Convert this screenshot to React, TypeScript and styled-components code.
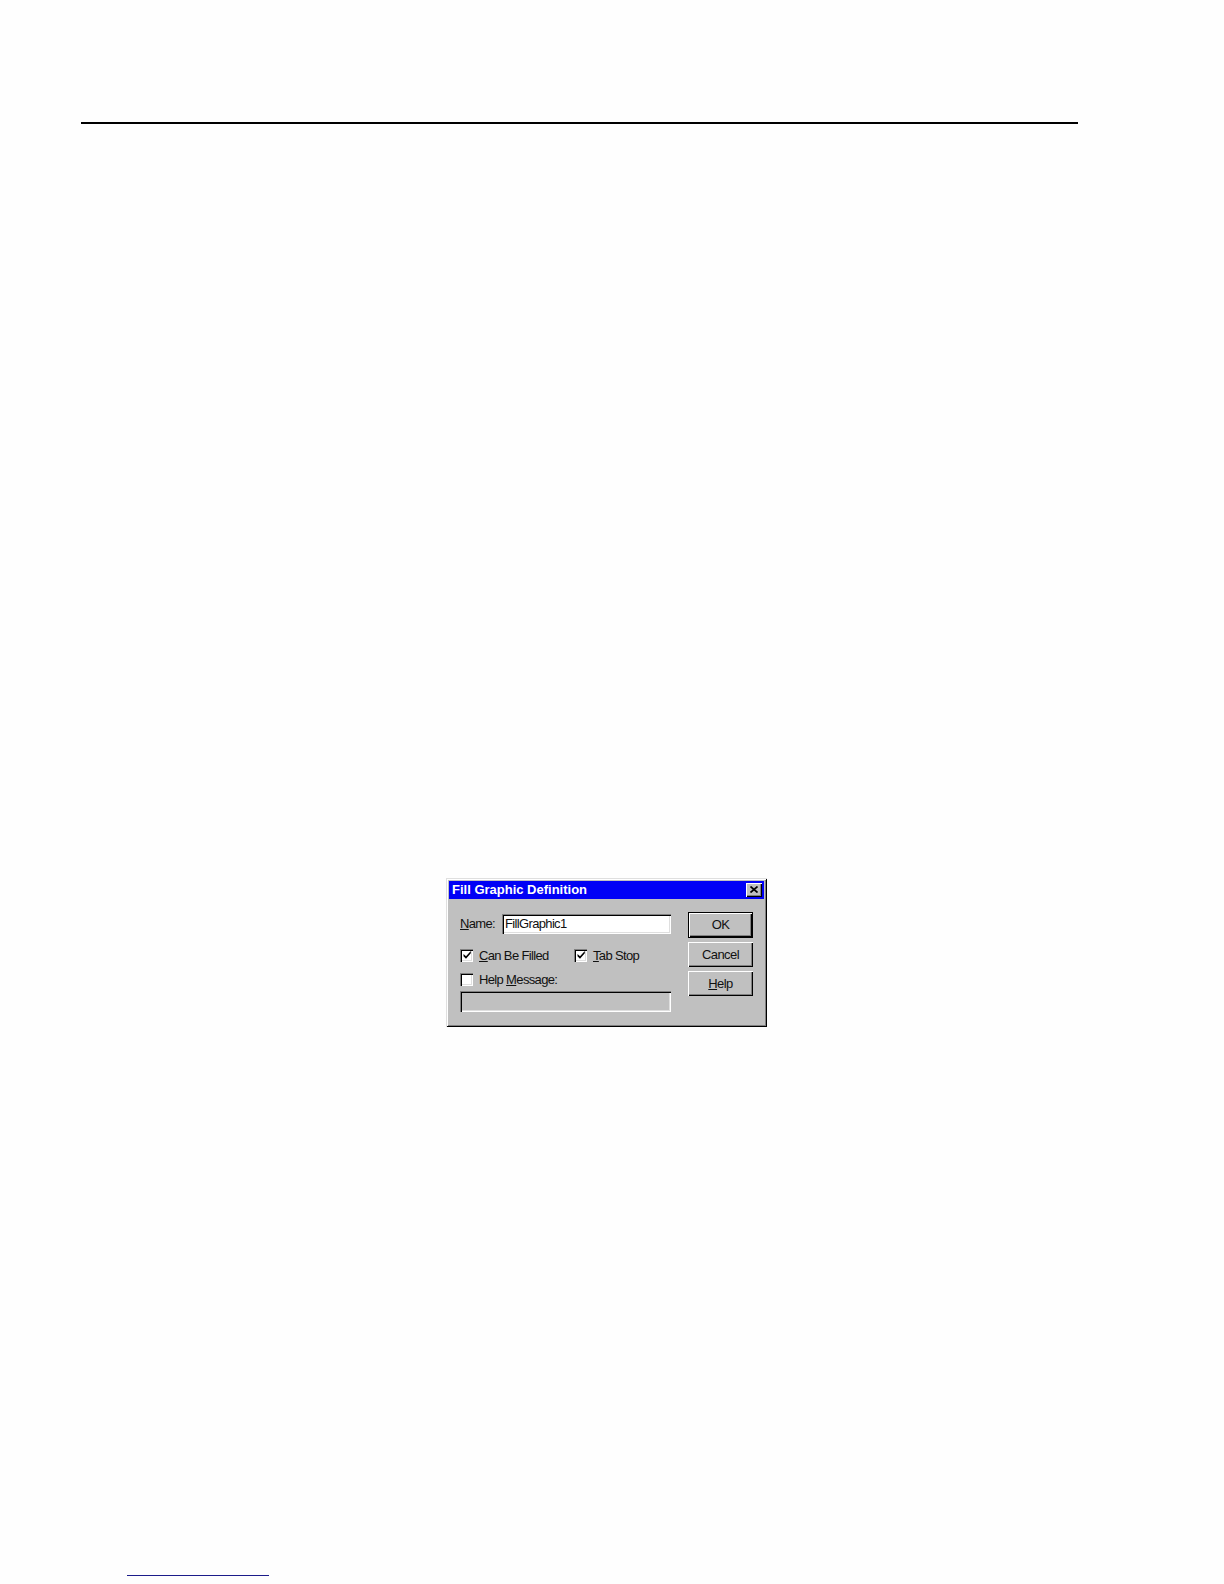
import React from "react";
import styled, { createGlobalStyle } from "styled-components";

const Global = createGlobalStyle`
  html, body { margin: 0; padding: 0; background: #fefefe; }
  body { font-family: "Liberation Sans", Arial, sans-serif; }
`;

const Page = styled.div`
  width: 1224px;
  height: 1584px;
  padding-top: 122px;
  box-sizing: border-box;
  display: flex;
  flex-direction: column;
`;

const TopRule = styled.div`
  margin-left: 81px;
  width: 997px;
  height: 1.5px;
  background: #000;
`;

const DialogArea = styled.div`
  margin-top: 754px;
  margin-left: 446px;
`;

const Window = styled.div`
  width: 321px;
  height: 149px;
  box-sizing: border-box;
  background: #c0c0c0;
  padding: 3px;
  display: flex;
  flex-direction: column;
  box-shadow: inset 1px 1px 0 #dfdfdf, inset -1px -1px 0 #000,
    inset 2px 2px 0 #fff, inset -2px -2px 0 #808080;
`;

const TitleBar = styled.div`
  height: 18px;
  background: #0000f6;
  display: flex;
  align-items: center;
  justify-content: space-between;
  padding: 0 2px 0 3px;
`;

const TitleText = styled.span`
  color: #fff;
  font-weight: bold;
  font-size: 13px;
  letter-spacing: 0;
`;

const CloseButton = styled.div`
  width: 16px;
  height: 14px;
  box-sizing: border-box;
  background: #c0c0c0;
  display: flex;
  align-items: center;
  justify-content: center;
  box-shadow: inset 1px 1px 0 #fff, inset -1px -1px 0 #000,
    inset -2px -2px 0 #808080;
`;

const Body = styled.div`
  flex: 1;
  display: flex;
  padding: 13px 0 0 11px;
  gap: 17px;
`;

const LeftCol = styled.div`
  width: 211px;
  padding-top: 2px;
  display: flex;
  flex-direction: column;
`;

const Label = styled.span`
  font-size: 13px;
  color: #111;
  letter-spacing: -0.65px;
  white-space: nowrap;
`;

const NameRow = styled.div`
  display: flex;
  align-items: center;
  height: 20px;
`;

const NameLabel = styled(Label)`
  width: 42px;
`;

const TextField = styled.div<{ $disabled?: boolean }>`
  flex: 1;
  height: ${(p) => (p.$disabled ? "21px" : "20px")};
  box-sizing: border-box;
  background: ${(p) => (p.$disabled ? "#c0c0c0" : "#fff")};
  display: flex;
  align-items: center;
  padding-left: 3px;
  box-shadow: inset 1px 1px 0 #808080, inset 2px 2px 0 #000,
    inset -1px -1px 0 #fff, inset -2px -2px 0 #dfdfdf;
`;

const CheckRow = styled.div<{ $top: number }>`
  display: flex;
  align-items: center;
  margin-top: ${(p) => p.$top}px;
  height: 13px;
`;

const CheckItem = styled.label<{ $width?: number }>`
  display: flex;
  align-items: center;
  gap: 6px;
  width: ${(p) => (p.$width ? `${p.$width}px` : "auto")};
`;

const Box = styled.span`
  width: 13px;
  height: 13px;
  box-sizing: border-box;
  background: #fff;
  display: flex;
  align-items: center;
  justify-content: center;
  box-shadow: inset 1px 1px 0 #808080, inset 2px 2px 0 #000,
    inset -1px -1px 0 #fff, inset -2px -2px 0 #dfdfdf;
`;

const FieldWrap = styled.div`
  margin-top: 5px;
  display: flex;
`;

const RightCol = styled.div`
  width: 65px;
  display: flex;
  flex-direction: column;
  gap: 4px;
`;

const Button = styled.div<{ $default?: boolean }>`
  height: ${(p) => (p.$default ? "26px" : "25px")};
  box-sizing: border-box;
  background: #c0c0c0;
  display: flex;
  align-items: center;
  justify-content: center;
  font-size: 13px;
  letter-spacing: -0.6px;
  color: #111;
  ${(p) =>
    p.$default
      ? `border: 1px solid #000;
         box-shadow: inset 1px 1px 0 #fff, inset -1px -1px 0 #000, inset -2px -2px 0 #808080;`
      : `box-shadow: inset 1px 1px 0 #fff, inset -1px -1px 0 #000, inset -2px -2px 0 #808080;`}
`;

const FootRule = styled.div`
  margin-top: 548px;
  margin-left: 127px;
  width: 142px;
  height: 1.5px;
  background: #1c1c8a;
`;

const Check = () => (
  <svg width="8" height="8" viewBox="0 0 8 8">
    <path d="M0.5 3 L0.5 5.2 L3 7.7 L7.8 2.2 L7.8 0 L3 5.2 Z" fill="#000" />
  </svg>
);

const Checkbox = ({ checked }: { checked?: boolean }) => (
  <Box>{checked && <Check />}</Box>
);

export default function App() {
  return (
    <>
      <Global />
      <Page>
        <TopRule />
        <DialogArea>
          <Window>
            <TitleBar>
              <TitleText>Fill Graphic Definition</TitleText>
              <CloseButton>
                <svg width="8" height="7" viewBox="0 0 8 7">
                  <path
                    d="M0.5 0.5 L7.5 6.5 M7.5 0.5 L0.5 6.5"
                    stroke="#000"
                    strokeWidth="1.7"
                  />
                </svg>
              </CloseButton>
            </TitleBar>
            <Body>
              <LeftCol>
                <NameRow>
                  <NameLabel>
                    <u>N</u>ame:
                  </NameLabel>
                  <TextField>
                    <Label>FillGraphic1</Label>
                  </TextField>
                </NameRow>
                <CheckRow $top={15}>
                  <CheckItem $width={114}>
                    <Checkbox checked />
                    <Label>
                      <u>C</u>an Be Filled
                    </Label>
                  </CheckItem>
                  <CheckItem>
                    <Checkbox checked />
                    <Label>
                      <u>T</u>ab Stop
                    </Label>
                  </CheckItem>
                </CheckRow>
                <CheckRow $top={11}>
                  <CheckItem>
                    <Checkbox />
                    <Label>
                      Help <u>M</u>essage:
                    </Label>
                  </CheckItem>
                </CheckRow>
                <FieldWrap>
                  <TextField $disabled />
                </FieldWrap>
              </LeftCol>
              <RightCol>
                <Button $default>OK</Button>
                <Button>Cancel</Button>
                <Button>
                  <span>
                    <u>H</u>elp
                  </span>
                </Button>
              </RightCol>
            </Body>
          </Window>
        </DialogArea>
        <FootRule />
      </Page>
    </>
  );
}
